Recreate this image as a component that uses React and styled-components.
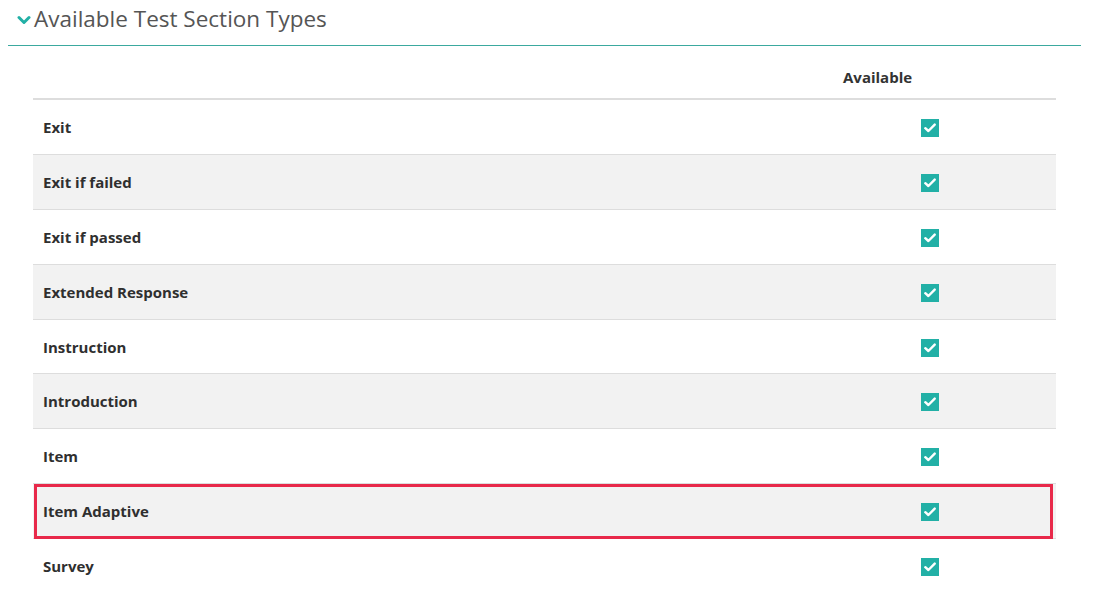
import React from "react";
import styled, { createGlobalStyle } from "styled-components";

const Global = createGlobalStyle`
  body { margin: 8px; background: #fff; font-family: "Open Sans", "Liberation Sans", sans-serif; }
`;

const Section = styled.section`
  width: 1073px;
`;

const Heading = styled.h2`
  margin: 0;
  display: flex;
  align-items: center;
  gap: 3px;
  padding: 0 0 15px 9px;
  font-size: 22.5px;
  font-weight: 400;
  color: #555;
  line-height: 22px;
  border-bottom: 1px solid #3ba99f;
`;

const Chevron = styled.svg`
  width: 14px;
  height: 10px;
  margin-top: 1px;
`;

const Table = styled.div`
  margin: 9px 25px 0 25px;
  width: 1023px;
`;

const Row = styled.div`
  position: relative;
  display: grid;
  grid-template-columns: 800px 194px 29px;
  align-items: center;
  height: ${p => (p.$header ? "43px" : "53.9px")};
  background: ${p => (p.$striped ? "#f2f2f2" : "#fff")};
  border-bottom: ${p => (p.$header ? "2px solid #ddd" : p.$last ? "none" : "1px solid #ddd")};
`;

const Cell = styled.div`
  padding: 0 10px;
  font-size: 15px;
  font-weight: 700;
  color: ${p => (p.$header ? "#333" : "#2f2f2f")};
`;

const CheckCell = styled.div`
  display: flex;
  justify-content: center;
  padding-top: 2px;
`;

const Box = styled.span`
  width: 18px;
  height: 18px;
  background: #22b0a6;
  display: flex;
  align-items: center;
  justify-content: center;
`;

const Highlight = styled.div`
  position: absolute;
  top: 0;
  left: 1px;
  right: 3px;
  bottom: -1px;
  border: 3px solid #e8294a;
  pointer-events: none;
`;

const Check = () => (
  <Box>
    <svg width="12" height="10" viewBox="0 0 12 10">
      <path d="M1.3 5.2 L4.4 8 L10.7 1.6" fill="none" stroke="#fff" strokeWidth="2.4" strokeLinecap="round" strokeLinejoin="round" />
    </svg>
  </Box>
);

const items = [
  "Exit",
  "Exit if failed",
  "Exit if passed",
  "Extended Response",
  "Instruction",
  "Introduction",
  "Item",
  "Item Adaptive",
  "Survey",
];

export default function App() {
  return (
    <>
      <Global />
      <Section>
        <Heading>
          <Chevron viewBox="0 0 14 10">
            <path d="M2 2.5 L7 7.5 L12 2.5" fill="none" stroke="#22b0a6" strokeWidth="3" strokeLinecap="round" strokeLinejoin="round" />
          </Chevron>
          Available Test Section Types
        </Heading>
        <Table>
          <Row $header>
            <Cell />
            <Cell $header>Available</Cell>
            <Cell />
          </Row>
          {items.map((name, i) => (
            <Row key={name} $striped={i % 2 === 1} $last={i === items.length - 1}>
              <Cell>{name}</Cell>
              <CheckCell>
                <Check />
              </CheckCell>
              <div />
              {name === "Item Adaptive" && <Highlight />}
            </Row>
          ))}
        </Table>
      </Section>
    </>
  );
}
